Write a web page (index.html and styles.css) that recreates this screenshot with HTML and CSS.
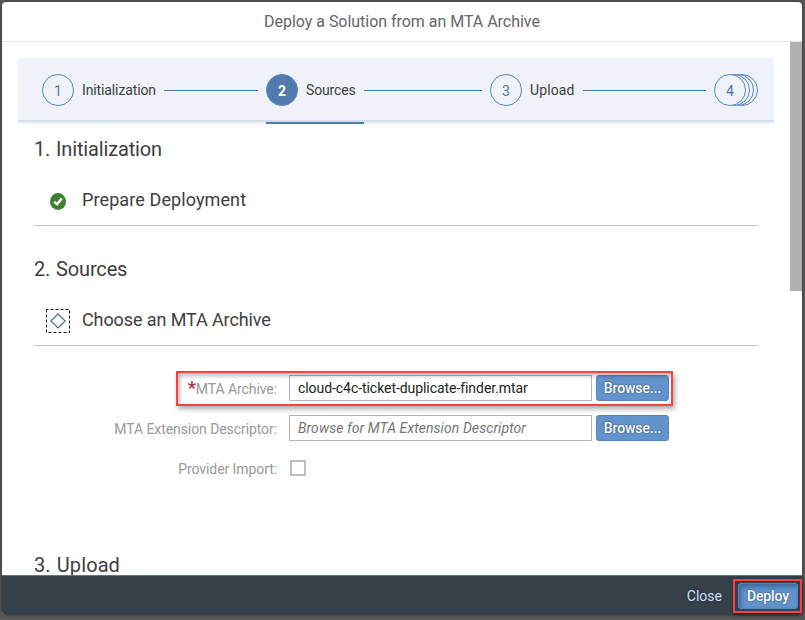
FILE: index.html
```html
<!DOCTYPE html>
<html lang="en">
<head>
<meta charset="utf-8">
<title>Deploy a Solution from an MTA Archive</title>
<link rel="stylesheet" href="styles.css">
</head>
<body>
<div class="dialog">
  <header class="dialog-header"><h1>Deploy a Solution from an MTA Archive</h1></header>
  <main class="dialog-body">
    <div class="content">
      <nav class="wizard">
        <div class="step step-1"><span class="circle">1</span><span class="step-name init">Initialization</span><i class="line"></i></div>
        <div class="step step-2 active"><span class="circle">2</span><span class="step-name sources">Sources</span><i class="line"></i></div>
        <div class="step step-3"><span class="circle">3</span><span class="step-name upload">Upload</span><i class="line"></i></div>
        <div class="step-stack">
          <svg width="44" height="32" viewBox="0 0 44 32" fill="none" stroke="#5b87bb"><circle cx="28" cy="16" r="15.5"/><circle cx="24" cy="16" r="15.5" fill="#eff2f9"/><circle cx="20" cy="16" r="15.5" fill="#eff2f9"/><circle cx="16" cy="16" r="15.5" fill="#eff2f9"/></svg>
          <span class="stack-number">4</span>
        </div>
      </nav>
      <section class="section">
        <h2 class="h-init">1. Initialization</h2>
        <div class="task">
          <span class="task-icon"><svg width="16" height="17" viewBox="0 0 16 17"><ellipse cx="8" cy="8.5" rx="8" ry="8.5" fill="#3a8130"/><path d="M4.1 8.6 7 11.3 11.8 5.5" fill="none" stroke="#fff" stroke-width="2.5"/></svg></span>
          <h3 class="h-prepare">Prepare Deployment</h3>
        </div>
      </section>
      <section class="section">
        <h2 class="h-sources">2. Sources</h2>
        <div class="task">
          <span class="task-icon"><svg width="24" height="24" viewBox="0 0 24 24" fill="none"><rect x=".5" y=".5" width="23" height="23" stroke="#111" stroke-dasharray="3 2" stroke-dashoffset="1"/><path d="M12 5 19.2 12 12 19 4.8 12Z" stroke="#416694" stroke-width="1.1"/></svg></span>
          <h3 class="h-choose">Choose an MTA Archive</h3>
        </div>
      </section>
      <form class="form">
        <div class="row">
          <label class="l-archive"><b>*</b>MTA Archive:</label>
          <div class="field filled">cloud-c4c-ticket-duplicate-finder.mtar</div>
          <button type="button" class="button browse">Browse...</button>
          <div class="highlight"></div>
        </div>
        <div class="row">
          <label class="l-ext">MTA Extension Descriptor:</label>
          <div class="field placeholder">Browse for MTA Extension Descriptor</div>
          <button type="button" class="button browse">Browse...</button>
        </div>
        <div class="row">
          <label class="l-provider">Provider Import:</label>
          <span class="checkbox"></span>
        </div>
      </form>
      <h2 class="h-upload">3. Upload</h2>
    </div>
    <div class="scrollbar"><div class="thumb"></div></div>
  </main>
  <footer class="dialog-footer">
    <span class="close">Close</span>
    <div class="deploy-frame"><button type="button" class="button deploy">Deploy</button></div>
  </footer>
</div>
</body>
</html>
```
FILE: styles.css
```css
* { box-sizing: border-box; }
body { margin: 0; width: 805px; height: 620px; padding: 2px 3px 5px 2px; overflow: hidden; background: #5b5a5b; font-family: Roboto, "Open Sans", sans-serif; color: #3e3e3e; }
h1, h2, h3 { margin: 0; font-weight: 400; white-space: nowrap; }
.dialog { height: 613px; display: flex; flex-direction: column; border-radius: 4px; background: #fff; box-shadow: 0 0 3px #252525; }
.dialog-header { height: 40px; flex: none; border-bottom: 1px solid #e5e5e5; text-align: center; }
h1 { font-size: 16px; line-height: 39px; letter-spacing: -.03px; color: #666; }
.dialog-body { height: 533px; flex: none; display: flex; overflow: hidden; }
.content { width: 788px; padding: 16px 16px 0; }
.scrollbar { width: 12px; }
.thumb { height: 249px; background: #b0b0b0; }

.wizard { display: flex; height: 66px; padding: 16px 16px 0 24px; background: linear-gradient(#eff2f9 62px, #d1dfed 62px, #d1dfed 64px, #eff2f9 64px); }
.step { display: flex; width: 224px; height: 50px; font-size: 14px; line-height: 32px; }
.circle { width: 32px; height: 32px; flex: none; border: 1px solid #5b87bb; border-radius: 50%; color: #4c79ad; text-align: center; line-height: 32px; }
.step-name { margin-left: 8px; flex: none; white-space: nowrap; }
.init { width: 82px; letter-spacing: -.12px; }
.sources { width: 58px; letter-spacing: -.15px; }
.upload { width: 53px; letter-spacing: .1px; }
.line { height: 1px; flex: 1; margin: 16px 8px 0 0; background: #427cac; }
.active { background: linear-gradient(#4f7baf, #4f7baf) 0 48px / 98px 2px no-repeat; }
.active .circle { background: #4f7baf; color: #fff; font-weight: 700; }
.step-stack { position: relative; width: 44px; height: 32px; }
.step-stack svg { display: block; }
.stack-number { position: absolute; inset: 0 12px 0 0; font-size: 14px; line-height: 34px; text-align: center; color: #4c79ad; }

.section { height: 120px; padding: 12px 16px 0; }
h2 { font-size: 20px; line-height: 26px; word-spacing: 1px; }
.h-init { letter-spacing: -.15px; }
.h-sources { letter-spacing: -.15px; }
.h-prepare { letter-spacing: .1px; }
.h-choose { letter-spacing: -.1px; }
.task { display: flex; height: 64px; border-bottom: 1px solid #c7c7c7; }
.task-icon { display: flex; width: 48px; align-items: center; justify-content: center; padding-top: 15px; }
h3 { font-size: 18px; line-height: 24px; margin-top: 26px; }

.form { padding-top: 11px; }
.row { position: relative; display: flex; height: 40px; font-size: 14px; }
label { width: 259px; margin-right: 12px; text-align: right; line-height: 28px; color: #999; white-space: nowrap; letter-spacing: -.08px; }
label b { color: #b3343b; font-size: 18px; line-height: 20px; }
.field { width: 303px; height: 26px; padding-left: 8px; border: 1px solid #b5b5b5; line-height: 24px; color: #222; white-space: nowrap; letter-spacing: -.06px; }
.placeholder { color: #757575; font-style: italic; letter-spacing: .07px; }
.button { padding: 0; border: 1px solid #5185c8; border-radius: 3px; background: #6393cb; color: #fff; font: 500 14px/24px Roboto, sans-serif; letter-spacing: -.1px; text-shadow: 0 0 2px #263e5d; white-space: nowrap; }
.browse { width: 73px; height: 26px; margin-left: 4px; }
.highlight { position: absolute; left: 158px; top: -4px; width: 497px; height: 35px; border: 2px solid #f94144; box-shadow: 2px 3px 5px #0005, inset 2px 3px 4px #0004; }
.checkbox { width: 16px; height: 16px; margin: 5px 0 0 1px; border: 2px solid #bfbfbf; }
.h-upload { padding: 57px 16px 0; letter-spacing: .1px; }

.dialog-footer { height: 40px; display: flex; justify-content: flex-end; background: #354049; border-top: 1px solid #69737c; border-radius: 0 0 4px 4px; }
.close { margin: 0 11px 0 0; color: #d2e1f6; font-size: 14px; line-height: 41px; text-shadow: 0 0 2px #1b2b40; }
.deploy-frame { width: 69px; height: 34px; flex: none; margin-top: 3px; padding: 2px 2px 2px 3px; border: 2px solid #f94144; box-shadow: 1px 2px 4px #0006; }
.deploy { width: 60px; height: 26px; box-shadow: inset 2px 3px 4px #3e689b; }
```
